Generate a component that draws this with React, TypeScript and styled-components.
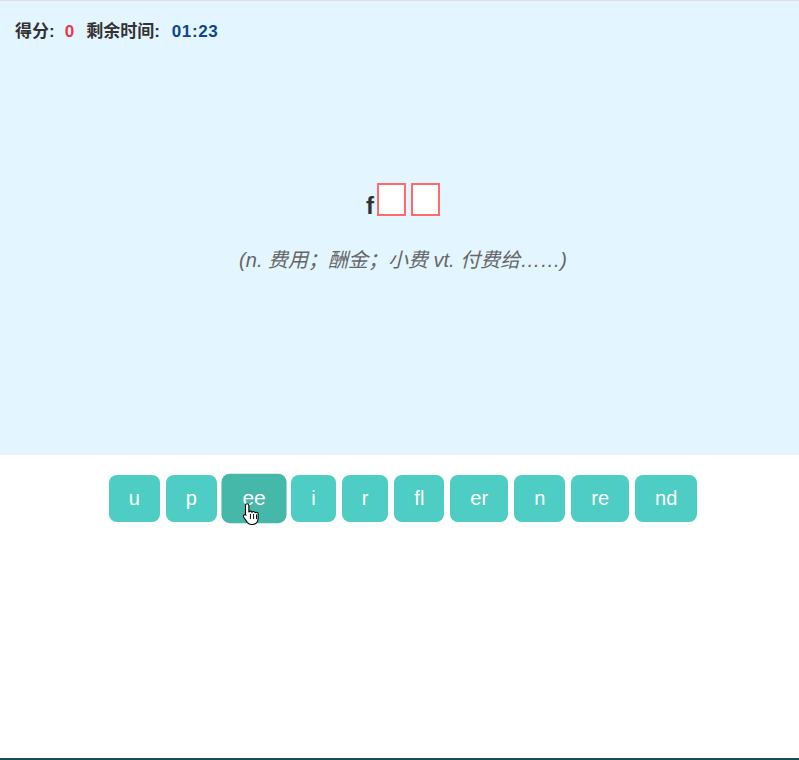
import React from "react";
import styled, { createGlobalStyle } from "styled-components";

const Global = createGlobalStyle`
  html, body { margin: 0; padding: 0; background: #fff; }
  body { font-family: "Liberation Sans", "Noto Sans CJK SC", Arial, sans-serif; }
`;

const Page = styled.div`
  height: 760px;
  box-sizing: border-box;
  border-top: 1px solid #dedede;
  border-bottom: 2px solid #15505a;
  display: flex;
  flex-direction: column;
`;

const Stage = styled.section`
  height: 454px;
  background: #e3f5fe;
  box-sizing: border-box;
  padding: 20px 15px 0;
  display: flex;
  flex-direction: column;
`;

const Status = styled.div`
  display: flex;
  align-items: baseline;
  font-size: 17px;
  font-weight: bold;
  color: #333;
  line-height: 21px;
`;

const Label = styled.span<{ $wide?: boolean }>`
  margin-right: ${(p) => (p.$wide ? "12px" : "10px")};
`;

const Value = styled.span<{ $tone: "red" | "blue" }>`
  color: ${(p) => (p.$tone === "red" ? "#e63946" : "#0d4593")};
  margin-right: ${(p) => (p.$tone === "red" ? "12px" : "0")};
  letter-spacing: ${(p) => (p.$tone === "blue" ? "0.6px" : "0")};
`;

const WordArea = styled.div`
  margin-top: 141px;
  padding-left: 7px;
  display: flex;
  flex-direction: column;
  align-items: center;
`;

const Word = styled.div`
  display: flex;
  align-items: flex-end;
  font-size: 24px;
  font-weight: bold;
  color: #333;
  line-height: 28px;
`;

const Letter = styled.span`
  margin-right: 3px;
  margin-bottom: -4px;
`;

const Blank = styled.span`
  width: 25px;
  height: 29px;
  border: 2px solid #ff6b6b;
  background: #fff;
  margin-right: 5px;
  &:last-child { margin-right: 0; }
`;

const Meaning = styled.div`
  margin-top: 28px;
  font-size: 20px;
  font-style: italic;
  color: #666;
`;

const Tray = styled.div`
  display: flex;
  justify-content: center;
  gap: 6px;
  padding: 20px 0 0 7px;
`;

const Piece = styled.button<{ $hover?: boolean }>`
  position: relative;
  font-family: "Liberation Sans", Arial, sans-serif;
  font-size: 20px;
  line-height: 23px;
  color: #fff;
  background: ${(p) => (p.$hover ? "#45b8aa" : "#4ecdc4")};
  border: none;
  border-radius: 8px;
  padding: 12px 20px;
  transform: ${(p) => (p.$hover ? "scale(1.05)" : "none")};
  cursor: pointer;
`;

const Pointer = styled.svg`
  position: absolute;
  left: 20px;
  top: 27px;
  pointer-events: none;
`;

const HandCursor = () => (
  <Pointer width="17" height="22" viewBox="0 0 17 22">
    <path
      d="M4.5 1.5c.9 0 1.6.7 1.6 1.6v6.2c.3-.5.8-.8 1.4-.8.8 0 1.4.5 1.6 1.2.3-.5.8-.8 1.4-.8.8 0 1.4.5 1.6 1.2.3-.4.7-.6 1.2-.6.9 0 1.6.7 1.6 1.6v4.5c0 3.2-2.3 5.7-5.4 5.7H8.6c-1.7 0-3-.8-4-2.1L1.2 14.3c-.5-.7-.4-1.6.2-2.1.7-.5 1.6-.4 2.1.3l-.6-.8V3.1c0-.9.7-1.6 1.6-1.6z"
      fill="#fff"
      stroke="#000"
      strokeWidth="1"
      strokeLinejoin="round"
    />
    <path d="M7.6 11.5v4.2M10.6 11.5v4.2M13.4 12v3.7" stroke="#000" strokeWidth="0.9" strokeLinecap="round" />
  </Pointer>
);

const pieces = ["u", "p", "ee", "i", "r", "fl", "er", "n", "re", "nd"];

export default function App() {
  return (
    <>
      <Global />
      <Page>
        <Stage>
          <Status>
            <Label>得分:</Label>
            <Value $tone="red">0</Value>
            <Label $wide>剩余时间:</Label>
            <Value $tone="blue">01:23</Value>
          </Status>
          <WordArea>
            <Word>
              <Letter>f</Letter>
              <Blank />
              <Blank />
            </Word>
            <Meaning>(n. 费用；酬金；小费 vt. 付费给……)</Meaning>
          </WordArea>
        </Stage>
        <Tray>
          {pieces.map((p) => (
            <Piece key={p} $hover={p === "ee"}>
              {p}
              {p === "ee" && <HandCursor />}
            </Piece>
          ))}
        </Tray>
      </Page>
    </>
  );
}
